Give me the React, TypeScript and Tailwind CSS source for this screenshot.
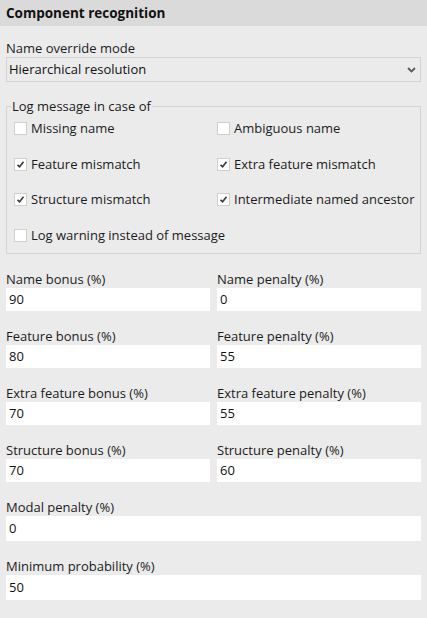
import React from "react";

const font = { fontFamily: '"Open Sans", "Noto Sans", sans-serif' };

function Check({ label, checked }: { label: string; checked?: boolean }) {
  return (
    <div className="flex items-center h-[35.5px]">
      <div className="w-[13px] h-[13px] bg-white border border-[#cfcfcf] flex items-center justify-center shrink-0">
        {checked && (
          <svg width="9" height="9" viewBox="0 0 9 9">
            <path d="M1.5 4.8 L3.6 6.8 L7.5 1.8" fill="none" stroke="#3a3a3a" strokeWidth="1.6" />
          </svg>
        )}
      </div>
      <span className="ml-[4px] text-[13px] text-[#1b1b1b] whitespace-nowrap">{label}</span>
    </div>
  );
}

function Field({ label, value, tall }: { label: string; value: string; tall?: boolean }) {
  return (
    <div className="flex flex-col">
      <div className="h-[17px] leading-[17px] text-[13px] text-[#1b1b1b] whitespace-nowrap">{label}</div>
      <div className={`${tall ? "h-[25px]" : "h-[23px]"} bg-white flex items-center px-[3px] text-[13px] text-[#111]`}>
        {value}
      </div>
    </div>
  );
}

export default function App() {
  return (
    <div className="w-[427px] h-[618px] bg-[#ebebeb] overflow-hidden" style={font}>
      <div className="h-[26px] bg-[#dadada] flex items-center px-[6px] font-bold text-[13.5px] text-[#111]">
        Component recognition
      </div>
      <div className="px-[6px]">
        <div className="mt-[14px] h-[17px] leading-[17px] text-[13px] text-[#1b1b1b]">Name override mode</div>
        <div className="h-[25px] border border-[#d3d3d3] flex items-center justify-between pl-[2px] pr-[4px] text-[13px] text-[#111]">
          <span>Hierarchical resolution</span>
          <svg width="9" height="6" viewBox="0 0 9 6">
            <path d="M1 1 L4.5 4.5 L8 1" fill="none" stroke="#5a5a5a" strokeWidth="1.8" />
          </svg>
        </div>
        <div className="relative mt-[24px] border border-[#d3d3d3] pt-[4px] pl-[7px]">
          <div className="absolute left-[4px] top-[-9px] px-[1px] bg-[#ebebeb] h-[17px] leading-[17px] text-[13px] text-[#1b1b1b]">
            Log message in case of
          </div>
          <div className="grid grid-cols-[203px_1fr]">
            <Check label="Missing name" />
            <Check label="Ambiguous name" />
            <Check label="Feature mismatch" checked />
            <Check label="Extra feature mismatch" checked />
            <Check label="Structure mismatch" checked />
            <Check label="Intermediate named ancestor" checked />
            <Check label="Log warning instead of message" />
          </div>
        </div>
        <div className="mt-[17px] grid grid-cols-2 gap-x-[7px] gap-y-[17px]">
          <Field label="Name bonus (%)" value="90" />
          <Field label="Name penalty (%)" value="0" />
          <Field label="Feature bonus (%)" value="80" />
          <Field label="Feature penalty (%)" value="55" />
          <Field label="Extra feature bonus (%)" value="70" />
          <Field label="Extra feature penalty (%)" value="55" />
          <Field label="Structure bonus (%)" value="70" />
          <Field label="Structure penalty (%)" value="60" />
          <div className="col-span-2">
            <Field label="Modal penalty (%)" value="0" tall />
          </div>
          <div className="col-span-2">
            <Field label="Minimum probability (%)" value="50" tall />
          </div>
        </div>
      </div>
    </div>
  );
}
